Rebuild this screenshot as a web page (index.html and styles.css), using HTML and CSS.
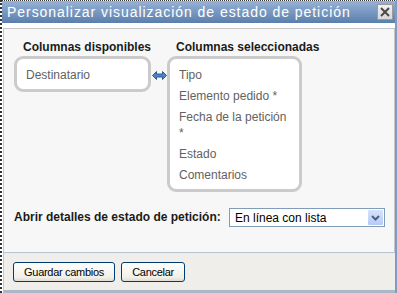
FILE: index.html
```html
<!DOCTYPE html>
<html lang="es">
<head>
<meta charset="UTF-8">
<meta name="viewport" content="width=device-width, initial-scale=1.0">
<title>Personalizar visualización de estado de petición</title>
<link rel="stylesheet" href="styles.css">
</head>
<body>
<div class="dialog">
    <div class="titlebar">
        <div class="title">Personalizar visualización de estado de petición</div>
        <div class="close">
            <svg width="14" height="14" viewBox="0 0 14 14">
                <path d="M3 3 L11 11 M11 3 L3 11" stroke="#4a4a4a" stroke-width="2" fill="none"/>
            </svg>
        </div>
    </div>
    <div class="body">
        <div class="panel">
            <div class="columns">
                <div class="col col-available">
                    <h3>Columnas disponibles</h3>
                    <ul class="box">
                        <li>Destinatario</li>
                    </ul>
                </div>
                <div class="swap">
                    <svg width="15" height="9" viewBox="0 0 15 9">
                        <polygon points="0.5,4.5 4.5,0.5 4.5,3 10.5,3 10.5,0.5 14.5,4.5 10.5,8.5 10.5,6 4.5,6 4.5,8.5" fill="#4f84c4" stroke="#2b5b98" stroke-width="1"/>
                    </svg>
                </div>
                <div class="col col-selected">
                    <h3>Columnas seleccionadas</h3>
                    <ul class="box">
                        <li>Tipo</li>
                        <li>Elemento pedido *</li>
                        <li>Fecha de la petición *</li>
                        <li>Estado</li>
                        <li>Comentarios</li>
                    </ul>
                </div>
            </div>
            <div class="option-row">
                <label>Abrir detalles de estado de petición:</label>
                <div class="select">
                    <span>En línea con lista</span>
                    <span class="select-btn">
                        <svg width="9" height="6" viewBox="0 0 9 6">
                            <path d="M1 1 L4.5 4.5 L8 1" stroke="#4d6185" stroke-width="2" fill="none"/>
                        </svg>
                    </span>
                </div>
            </div>
        </div>
        <div class="footer">
            <button class="btn btn-save">Guardar cambios</button>
            <button class="btn btn-cancel">Cancelar</button>
        </div>
    </div>
</div>
</body>
</html>
```

FILE: styles.css
```css
body {
    margin: 0;
    font-family: "Liberation Sans", Arial, sans-serif;
    font-size: 12px;
}

.dialog {
    width: 397px;
    height: 293px;
    box-sizing: border-box;
    border-top: 1px dotted #333;
    border-left: 2px dotted #333;
    border-right: 2px solid #7f9cc2;
    background: #fff;
}

.titlebar {
    height: 22px;
    display: flex;
    align-items: center;
    padding: 0 2px 0 5px;
    background: linear-gradient(#97b2d6, #5a7fac);
}
.title {
    flex: 1;
    min-width: 0;
    overflow: hidden;
    color: #fff;
    font-size: 14px;
    letter-spacing: 0.95px;
    line-height: 22px;
    white-space: nowrap;
}
.close {
    flex: none;
    width: 16px;
    height: 16px;
    box-sizing: border-box;
    border: 1px solid #9a9a9a;
    background: linear-gradient(#f0f0f0, #d8d8d8);
    display: flex;
    align-items: center;
    justify-content: center;
}

.body {
    padding: 5px 0 0 1px;
}

.panel {
    height: 224px;
    box-sizing: border-box;
    border: 1px solid #c6c6c6;
    border-bottom: none;
    background: #f7f7f7;
    padding: 11px 9px 0 10px;
}

.columns {
    display: flex;
    align-items: flex-start;
}
.col-available {
    width: 137px;
}
.col-selected {
    width: 135px;
}
.col h3 {
    margin: 0 0 1px;
    padding-left: 9px;
    font-size: 12px;
    line-height: 15px;
    color: #1b1b1b;
    white-space: nowrap;
}
.box {
    list-style: none;
    margin: 0;
    padding: 8px 7px 6px 9px;
    border: 3px solid #cbcbcb;
    border-radius: 9px;
    background: #fff;
}
.box li {
    line-height: 16px;
    color: #626262;
    margin-bottom: 5px;
}
.box li:last-child {
    margin-bottom: 0;
}
.swap {
    width: 16px;
    margin-top: 31px;
    display: flex;
    justify-content: center;
}

.option-row {
    margin-top: 16px;
    display: flex;
    align-items: center;
    justify-content: space-between;
}
.option-row label {
    font-weight: bold;
    color: #1b1b1b;
    line-height: 19px;
}
.select {
    width: 156px;
    height: 19px;
    box-sizing: border-box;
    border: 1px solid #7f9db9;
    background: #fff;
    display: flex;
    align-items: center;
    justify-content: space-between;
    padding-left: 5px;
}
.select-btn {
    width: 15px;
    height: 15px;
    margin-right: 1px;
    background: linear-gradient(#d6e2fd, #b6cbf6);
    border-radius: 1px;
    display: flex;
    align-items: center;
    justify-content: center;
}

.footer {
    height: 41px;
    box-sizing: border-box;
    border-top: 1px solid #b7c4d3;
    border-bottom: 3px solid #a9b7c7;
    border-left: 1px solid #c6c6c6;
    background: #efeeeb;
    padding: 9px 0 0 9px;
    display: flex;
    gap: 6px;
    align-items: flex-start;
}
.btn {
    height: 20px;
    box-sizing: border-box;
    border: 1px solid #003c74;
    border-radius: 3px;
    background: linear-gradient(#ffffff, #f0efe8 80%, #dedbd0);
    font-family: "Liberation Sans", Arial, sans-serif;
    font-size: 11px;
    letter-spacing: -0.3px;
    color: #000;
    padding: 0;
}
.btn-save {
    width: 102px;
}
.btn-cancel {
    width: 64px;
}
```
